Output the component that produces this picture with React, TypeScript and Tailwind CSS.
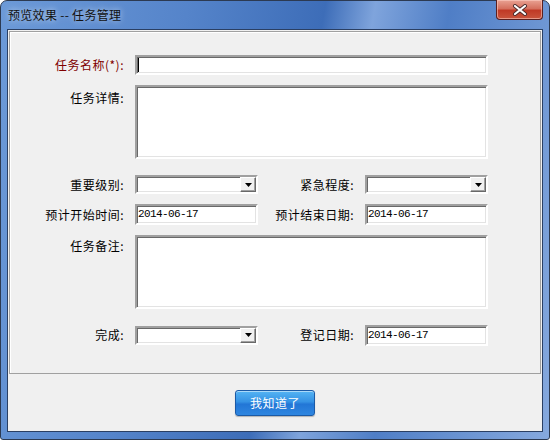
import React from "react";

const sunken =
  "bg-white border-2 border-t-[#a0a0a0] border-l-[#a0a0a0] border-r-white border-b-white shadow-[inset_1px_1px_0_#696969,inset_-1px_-1px_0_#e3e3e3]";

const Label = ({ text, w, red, top }: { text: string; w: string; red?: boolean; top?: string }) => (
  <div
    className={`${w} shrink-0 text-right text-[12px] leading-[14px] tracking-[0.5px] pr-[1px] ${
      red ? "text-[#800000]" : "text-black"
    } ${top ?? ""}`}
  >
    {text}
  </div>
);

const DateBox = ({ value }: { value: string }) => (
  <div className={`${sunken} w-[123px] h-[21px] flex items-center pl-[1px]`}>
    <span className="font-['Liberation_Mono',monospace] text-[11px] tracking-[-0.6px] text-black leading-none">
      {value}
    </span>
  </div>
);

const Combo = () => (
  <div className={`${sunken} w-[123px] h-[19px] flex justify-end items-stretch`}>
    <div className="w-[16px] bg-[#f0f0f0] border border-t-white border-l-white border-r-[#696969] border-b-[#696969] shadow-[inset_-1px_-1px_0_#a0a0a0] flex items-center justify-center">
      <svg width="7" height="4" viewBox="0 0 7 4">
        <path d="M0 0h7L3.5 4z" fill="#000" />
      </svg>
    </div>
  </div>
);

export default function App() {
  return (
    <div className="w-[550px] h-[440px] font-['Noto_Sans_CJK_SC','Noto_Sans',sans-serif] select-none">
      <div className="w-full h-full flex flex-col rounded-t-[7px] rounded-b-[3px] border border-[#2c3a52] bg-[linear-gradient(100deg,#6c9ad8_0%,#5584ca_30%,#3d6db8_52%,#7fa4dc_60%,#4f7ec6_72%,#86a9de_100%)] relative">
        {/* title bar */}
        <div className="h-[28px] flex items-center pl-[7px] shrink-0">
          <span className="text-[12px] tracking-[0.3px] text-[#111] leading-none [text-shadow:0_0_6px_rgba(255,255,255,0.7)]">
            预览效果 -- 任务管理
          </span>
        </div>
        <div className="absolute top-[-1px] right-[6px] w-[47px] h-[20px] rounded-b-[4px] border border-[#5a2020] border-t-0 bg-[linear-gradient(180deg,#e9a293_0%,#d5705e_45%,#c03a26_55%,#c9553d_100%)] shadow-[inset_0_0_0_1px_rgba(255,210,200,0.55)] flex items-center justify-center">
          <svg width="16" height="12" viewBox="0 0 16 12">
            <path d="M3 2l10 8M13 2L3 10" stroke="#4a2a2a" strokeWidth="4" strokeLinecap="round" />
            <path d="M3 2l10 8M13 2L3 10" stroke="#fff" strokeWidth="2.2" strokeLinecap="round" />
          </svg>
        </div>

        {/* client area */}
        <div className="flex-1 mx-[6px] mb-[7px] border border-[#2a3f63] bg-[#f0f0f0] flex flex-col">
          <div className="m-[1px] h-[343px] shrink-0 border border-[#a0a0a0] shadow-[inset_1px_1px_0_#fff] pt-[23px] flex flex-col">
            <div className="flex items-center h-[20px]">
              <Label text="任务名称(*):" w="w-[115px]" red />
              <div className={`${sunken} ml-[10px] w-[353px] h-[20px] flex items-center pl-[1px]`}>
                <div className="w-[1px] h-[14px] bg-black" />
              </div>
            </div>

            <div className="flex mt-[10px]">
              <Label text="任务详情:" w="w-[115px]" top="pt-[6px]" />
              <div className={`${sunken} ml-[10px] w-[353px] h-[74px]`} />
            </div>

            <div className="flex items-center mt-[16px] h-[19px]">
              <Label text="重要级别:" w="w-[115px]" />
              <div className="ml-[10px]">
                <Combo />
              </div>
              <Label text="紧急程度:" w="w-[97px]" />
              <div className="ml-[10px]">
                <Combo />
              </div>
            </div>

            <div className="flex items-center mt-[10px] h-[21px]">
              <Label text="预计开始时间:" w="w-[115px]" />
              <div className="ml-[10px]">
                <DateBox value="2014-06-17" />
              </div>
              <Label text="预计结束日期:" w="w-[97px]" />
              <div className="ml-[10px]">
                <DateBox value="2014-06-17" />
              </div>
            </div>

            <div className="flex mt-[10px]">
              <Label text="任务备注:" w="w-[115px]" top="pt-[4px]" />
              <div className={`${sunken} ml-[10px] w-[353px] h-[74px]`} />
            </div>

            <div className="flex items-center mt-[16px] h-[20px]">
              <Label text="完成:" w="w-[115px]" />
              <div className="ml-[10px]">
                <Combo />
              </div>
              <Label text="登记日期:" w="w-[97px]" />
              <div className="ml-[10px]">
                <DateBox value="2014-06-17" />
              </div>
            </div>
          </div>

          <div className="flex-1 flex items-center justify-center">
            <button className="w-[80px] h-[26px] rounded-[3px] border border-[#1b5aa6] bg-[linear-gradient(180deg,#55b4f4_0%,#3592e4_45%,#2276d6_55%,#2f86e0_100%)] shadow-[inset_0_1px_0_rgba(255,255,255,0.5),0_1px_1px_rgba(0,0,0,0.25)] text-white text-[12px] tracking-[0.5px] leading-none">
              我知道了
            </button>
          </div>
        </div>
      </div>
    </div>
  );
}
